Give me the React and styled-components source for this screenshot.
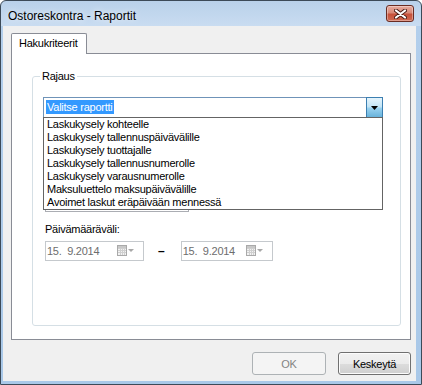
import React from "react"
import styled, { createGlobalStyle } from "styled-components"

const reports = [
  "Laskukysely kohteelle",
  "Laskukysely tallennuspäivävälille",
  "Laskukysely tuottajalle",
  "Laskukysely tallennusnumerolle",
  "Laskukysely varausnumerolle",
  "Maksuluettelo maksupäivävälille",
  "Avoimet laskut eräpäivään mennessä",
]

const GlobalStyle = createGlobalStyle`
  html, body {
    margin: 0;
    padding: 0;
    background: #ffffff;
  }
  body {
    font-family: "Liberation Sans", Arial, sans-serif;
    font-size: 11px;
    letter-spacing: -0.25px;
    color: #000;
  }
  * {
    box-sizing: border-box;
  }
`

// Window frame **********
const Window = styled.div`
  width: 422px;
  height: 385px;
  border: 1px solid #3c4a58;
  border-radius: 6px 6px 0 0;
  background: linear-gradient(#b9d1ea 0px, #c9dcf1 25px, #b3cfec 25px, #a9c8e8 100%);
  padding: 0 5px 3px 2px;
  display: flex;
  flex-direction: column;
  overflow: hidden;
`
const TitleBar = styled.div`
  height: 25px;
  display: flex;
  align-items: flex-start;
  justify-content: space-between;
`
const Title = styled.div`
  font-size: 12px;
  letter-spacing: 0;
  line-height: 14px;
  margin: 8px 0 0 5px;
  text-shadow: 0 0 6px rgba(255, 255, 255, 0.9);
`
const CloseButton = styled.div`
  width: 28px;
  height: 17px;
  margin: 4px 2px 0 0;
  border: 1px solid #6a2c22;
  border-radius: 3px;
  background: linear-gradient(#e6ab9f 0%, #d98a78 45%, #c7513a 55%, #cf6a52 100%);
  box-shadow: inset 0 0 0 1px rgba(255, 255, 255, 0.35);
  display: flex;
  align-items: center;
  justify-content: center;
`
const Client = styled.div`
  flex: 1;
  background: #f0f0f0;
  display: flex;
  flex-direction: column;
  padding: 7px 5px 6px 8px;
`

// Tabs **********
const TabStrip = styled.div`
  display: flex;
  height: 21px;
`
const Tab = styled.div`
  width: 76px;
  border: 1px solid #898c95;
  border-bottom: none;
  border-radius: 2px 2px 0 0;
  background: #ffffff;
  padding-left: 7px;
  line-height: 18px;
`
const TabFiller = styled.div`
  flex: 1;
  border-bottom: 1px solid #898c95;
`
const TabPanel = styled.div`
  height: 286px;
  border: 1px solid #898c95;
  border-top: none;
  background: #ffffff;
  display: flex;
  flex-direction: column;
  padding: 16px 9px 13px 20px;
`

// Group box **********
const Group = styled.fieldset`
  flex: 1;
  margin: 0;
  padding: 0;
  min-width: 0;
  border: 1px solid #d5dfe5;
  border-radius: 3px;
`
const Legend = styled.legend`
  margin-left: 7px;
  padding: 0 2px;
  line-height: 13px;
`
const GroupBody = styled.div`
  padding: 14px 0 0 10px;
  display: flex;
  flex-direction: column;
  align-items: flex-start;
`

// Combo box **********
const Combo = styled.div`
  position: relative;
  width: 340px;
  height: 21px;
  border: 1px solid #6f93b8;
  background: #ffffff;
  display: flex;
  align-items: flex-start;
`
const ComboText = styled.span`
  margin: 2px 0 0 2px;
  padding: 0 1px;
  line-height: 14px;
  background: #3399ff;
  color: #ffffff;
`
const DropButton = styled.div`
  width: 17px;
  height: 21px;
  margin: -1px -1px 0 auto;
  border: 1px solid #3c7fb1;
  background: linear-gradient(#e5f4fc 0%, #c4e5f6 45%, #98d1ef 55%, #68b3db 100%);
  display: flex;
  align-items: center;
  justify-content: center;
`
const DropList = styled.ul`
  position: absolute;
  top: 19px;
  left: -1px;
  width: 340px;
  margin: 0;
  padding: 0;
  list-style: none;
  border: 1px solid #646464;
  background: #ffffff;
  z-index: 2;
`
const DropItem = styled.li`
  height: 13px;
  line-height: 13px;
  padding-left: 3px;
  white-space: nowrap;
`

// Fields under the list **********
const HiddenField = styled.div`
  width: 144px;
  height: 20px;
  margin: 74px 0 0 2px;
  border: 1px solid #abadb3;
  background: #ffffff;
`
const FieldLabel = styled.div`
  margin: 11px 0 0 2px;
  line-height: 13px;
`
const DateRow = styled.div`
  display: flex;
  align-items: center;
  margin: 5px 0 0 2px;
`
const DatePicker = styled.div`
  width: ${p => p.$width}px;
  height: 20px;
  border: 1px solid #c5c9cd;
  background: #ffffff;
  color: #6d6d6d;
  display: flex;
  align-items: center;
  padding: 0 9px 0 1px;
`
const DateValue = styled.span`
  flex: 1;
  white-space: pre;
`
const Dash = styled.span`
  margin: 0 16px 0 14px;
  font-size: 12px;
  font-weight: bold;
  letter-spacing: 0;
`

// Dialog buttons **********
const Footer = styled.div`
  display: flex;
  justify-content: flex-end;
  gap: 12px;
  margin-top: 12px;
`
const DialogButton = styled.div`
  width: ${p => p.$width}px;
  height: 23px;
  border: 1px solid ${p => (p.$disabled ? "#adb2b5" : "#707070")};
  border-radius: 3px;
  background: ${p =>
    p.$disabled
      ? "#f4f4f4"
      : "linear-gradient(#f2f2f2 0%, #ebebeb 50%, #dddddd 50%, #cfcfcf 100%)"};
  box-shadow: ${p => (p.$disabled ? "none" : "inset 0 0 0 1px #fcfcfc")};
  color: ${p => (p.$disabled ? "#838383" : "#000000")};
  display: flex;
  align-items: center;
  justify-content: center;
`

function CloseGlyph() {
  return (
    <svg width="13" height="10" viewBox="0 0 13 10">
      <path d="M2 1.5 L11 8.5 M11 1.5 L2 8.5" stroke="#4a1d16" strokeWidth="4" strokeLinecap="round" />
      <path d="M2 1.5 L11 8.5 M11 1.5 L2 8.5" stroke="#ffffff" strokeWidth="2.2" strokeLinecap="round" />
    </svg>
  )
}

function CalendarGlyph() {
  return (
    <svg width="17" height="12" viewBox="0 0 17 12">
      <rect x="0.5" y="0.5" width="9" height="10" fill="#f2f2f2" stroke="#a9a9a9" />
      <path d="M1 3.5 H9 M1 5.5 H9 M1 7.5 H9 M3.5 3 V10 M5.5 3 V10 M7.5 3 V10" stroke="#cfcfcf" />
      <rect x="1" y="1" width="8" height="2" fill="#c8c8c8" />
      <polygon points="11,4 17,4 14,7" fill="#a8a8a8" />
    </svg>
  )
}

function DateField({ value, width }) {
  return (
    <DatePicker $width={width}>
      <DateValue>{value}</DateValue>
      <CalendarGlyph />
    </DatePicker>
  )
}

export default function App() {
  return (
    <>
      <GlobalStyle />
      <Window>
        <TitleBar>
          <Title>Ostoreskontra - Raportit</Title>
          <CloseButton>
            <CloseGlyph />
          </CloseButton>
        </TitleBar>
        <Client>
          <TabStrip>
            <Tab>Hakukriteerit</Tab>
            <TabFiller />
          </TabStrip>
          <TabPanel>
            <Group>
              <Legend>Rajaus</Legend>
              <GroupBody>
                <Combo>
                  <ComboText>Valitse raportti</ComboText>
                  <DropButton>
                    <svg width="7" height="4" viewBox="0 0 7 4">
                      <polygon points="0,0 7,0 3.5,4" fill="#000" />
                    </svg>
                  </DropButton>
                  <DropList>
                    {reports.map(r => (
                      <DropItem key={r}>{r}</DropItem>
                    ))}
                  </DropList>
                </Combo>
                <HiddenField />
                <FieldLabel>Päivämääräväli:</FieldLabel>
                <DateRow>
                  <DateField value="15.  9.2014" width={99} />
                  <Dash>–</Dash>
                  <DateField value="15.  9.2014" width={92} />
                </DateRow>
              </GroupBody>
            </Group>
          </TabPanel>
          <Footer>
            <DialogButton $width={74} $disabled>OK</DialogButton>
            <DialogButton $width={73}>Keskeytä</DialogButton>
          </Footer>
        </Client>
      </Window>
    </>
  )
}
